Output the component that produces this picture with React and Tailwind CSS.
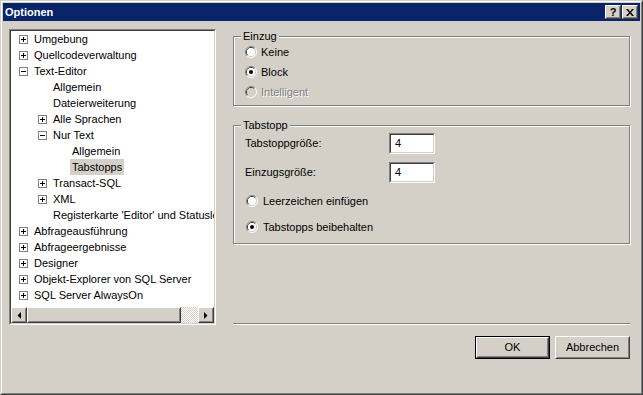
import React from "react";

const FONT = "font-['Liberation_Sans',Arial,sans-serif]";

function Raised({ className = "", children }) {
  return (
    <div className={`bg-[#d4d0c8] border border-t-white border-l-white border-r-[#404040] border-b-[#404040] ${className}`}>
      <div className="w-full h-full border border-t-[#d4d0c8] border-l-[#d4d0c8] border-r-[#808080] border-b-[#808080] flex items-center justify-center">
        {children}
      </div>
    </div>
  );
}

function Sunken({ className = "", innerClass = "", children }) {
  return (
    <div className={`border border-t-[#808080] border-l-[#808080] border-r-white border-b-white ${className}`}>
      <div className={`w-full h-full border border-t-[#404040] border-l-[#404040] border-r-[#d4d0c8] border-b-[#d4d0c8] ${innerClass}`}>
        {children}
      </div>
    </div>
  );
}

function Radio({ checked, disabled }) {
  return (
    <svg width="12" height="12" viewBox="0 0 12 12" className="shrink-0">
      <path d="M2.11 9.89 A5.5 5.5 0 0 1 9.89 2.11" fill="none" stroke="#808080" strokeWidth="1" />
      <path d="M9.89 2.11 A5.5 5.5 0 0 1 2.11 9.89" fill="none" stroke="#ffffff" strokeWidth="1" />
      <path d="M2.82 9.18 A4.5 4.5 0 0 1 9.18 2.82" fill="none" stroke="#404040" strokeWidth="1" />
      <path d="M9.18 2.82 A4.5 4.5 0 0 1 2.82 9.18" fill="none" stroke="#d4d0c8" strokeWidth="1" />
      <circle cx="6" cy="6" r="4" fill={disabled ? "#d4d0c8" : "#ffffff"} />
      {checked && <circle cx="6" cy="6" r="2" fill={disabled ? "#808080" : "#000000"} />}
    </svg>
  );
}

function ExpandBox({ open }) {
  return (
    <svg width="9" height="9" viewBox="0 0 9 9" className="shrink-0">
      <rect x="0.5" y="0.5" width="8" height="8" fill="#fff" stroke="#808080" />
      <rect x="2" y="4" width="5" height="1" fill="#000" />
      {!open && <rect x="4" y="2" width="1" height="5" fill="#000" />}
    </svg>
  );
}

const tree = [
  { l: 0, t: "Umgebung", b: "+" },
  { l: 0, t: "Quellcodeverwaltung", b: "+" },
  { l: 0, t: "Text-Editor", b: "-" },
  { l: 1, t: "Allgemein" },
  { l: 1, t: "Dateierweiterung" },
  { l: 1, t: "Alle Sprachen", b: "+" },
  { l: 1, t: "Nur Text", b: "-" },
  { l: 2, t: "Allgemein" },
  { l: 2, t: "Tabstopps", sel: true },
  { l: 1, t: "Transact-SQL", b: "+" },
  { l: 1, t: "XML", b: "+" },
  { l: 1, t: "Registerkarte 'Editor' und Statusleiste" },
  { l: 0, t: "Abfrageausführung", b: "+" },
  { l: 0, t: "Abfrageergebnisse", b: "+" },
  { l: 0, t: "Designer", b: "+" },
  { l: 0, t: "Objekt-Explorer von SQL Server", b: "+" },
  { l: 0, t: "SQL Server AlwaysOn", b: "+" },
];

const indent = ["pl-[8px]", "pl-[27px]", "pl-[46px]"];

function TreeRow({ item }) {
  return (
    <div className={`flex items-center h-4 whitespace-nowrap ${indent[item.l]}`}>
      {item.b ? <ExpandBox open={item.b === "-"} /> : <div className="w-[9px] shrink-0" />}
      {item.sel ? (
        <span className="ml-[4px] px-[2px] h-4 leading-4 bg-[#d4d0c8]">{item.t}</span>
      ) : (
        <span className="ml-[6px] leading-4">{item.t}</span>
      )}
    </div>
  );
}

function Arrow({ dir }) {
  return (
    <svg width="4" height="7" viewBox="0 0 4 7">
      {dir === "left" ? <path d="M4 0 L4 7 L0.5 3.5 Z" fill="#000" /> : <path d="M0 0 L0 7 L3.5 3.5 Z" fill="#000" />}
    </svg>
  );
}

function GroupBox({ label, className = "", children }) {
  return (
    <div className={`relative border border-[#808080] shadow-[inset_1px_1px_0_#fff,1px_1px_0_#fff] ${className}`}>
      <span className="absolute -top-[7px] left-[7px] px-[2px] bg-[#d4d0c8] leading-[13px]">{label}</span>
      {children}
    </div>
  );
}

export default function App() {
  return (
    <div className={`w-[643px] h-[395px] bg-[#d4d0c8] text-[11px] text-black ${FONT} border border-t-[#d4d0c8] border-l-[#d4d0c8] border-r-[#404040] border-b-[#404040]`}>
      <div className="w-full h-full border border-t-white border-l-white border-r-[#808080] border-b-[#808080] p-px flex flex-col">
        {/* Title bar */}
        <div className="h-[18px] bg-[#0a246a] flex items-center justify-between pl-[2px] pr-[2px] shrink-0">
          <span className="text-white font-bold text-[11px] leading-[18px]">Optionen</span>
          <div className="flex gap-[1px]">
            <Raised className="w-[16px] h-[14px]">
              <span className="font-bold text-[11px] leading-none text-black">?</span>
            </Raised>
            <Raised className="w-[16px] h-[14px]">
              <svg width="8" height="7" viewBox="0 0 8 7">
                <path d="M0 0 L2 0 L4 2.5 L6 0 L8 0 L5 3.5 L8 7 L6 7 L4 4.5 L2 7 L0 7 L3 3.5 Z" fill="#000" />
              </svg>
            </Raised>
          </div>
        </div>

        {/* Content */}
        <div className="flex flex-1 pl-[6px]">
          {/* Tree */}
          <Sunken className="w-[207px] h-[296px] mt-[8px] shrink-0" innerClass="bg-white flex flex-col overflow-hidden">
            <div className="flex flex-col h-[272px] overflow-hidden">
              {tree.map((it, i) => (
                <TreeRow key={i} item={it} />
              ))}
            </div>
            <div className="flex-1" />
            <div className="h-4 flex shrink-0">
              <Raised className="w-4 h-4 shrink-0">
                <Arrow dir="left" />
              </Raised>
              <Raised className="w-[154px] h-4 shrink-0" />
              <div className="flex-1 bg-[image:repeating-conic-gradient(#ffffff_0%_25%,#d4d0c8_0%_50%)] bg-[length:2px_2px]" />
              <Raised className="w-4 h-4 shrink-0">
                <Arrow dir="right" />
              </Raised>
            </div>
          </Sunken>

          {/* Right panel */}
          <div className="w-[397px] ml-[17px] pt-[15px] flex flex-col">
            <GroupBox label="Einzug" className="h-[70px]">
              <div className="flex flex-col pt-[5px] pl-[11px]">
                <div className="flex items-center h-5 gap-[4px]">
                  <Radio />
                  <span>Keine</span>
                </div>
                <div className="flex items-center h-5 gap-[4px]">
                  <Radio checked />
                  <span>Block</span>
                </div>
                <div className="flex items-center h-5 gap-[4px]">
                  <Radio disabled />
                  <span className="text-[#808080] [text-shadow:1px_1px_0_#fff]">Intelligent</span>
                </div>
              </div>
            </GroupBox>

            <GroupBox label="Tabstopp" className="h-[119px] mt-[19px]">
              <div className="flex flex-col pt-[7px] pl-[11px]">
                <div className="flex items-center h-[21px]">
                  <span className="w-[144px]">Tabstoppgröße:</span>
                  <Sunken className="w-[46px] h-[21px]" innerClass="bg-white flex items-center pl-[4px]">
                    <span>4</span>
                  </Sunken>
                </div>
                <div className="flex items-center h-[21px] mt-[8px]">
                  <span className="w-[144px]">Einzugsgröße:</span>
                  <Sunken className="w-[46px] h-[21px]" innerClass="bg-white flex items-center pl-[4px]">
                    <span>4</span>
                  </Sunken>
                </div>
                <div className="flex items-center h-5 mt-[8px] pl-[1px] gap-[5px]">
                  <Radio />
                  <span>Leerzeichen einfügen</span>
                </div>
                <div className="flex items-center h-5 mt-[6px] pl-[1px] gap-[5px]">
                  <Radio checked />
                  <span>Tabstopps beibehalten</span>
                </div>
              </div>
            </GroupBox>

            <div className="mt-[79px] h-[2px] border-t border-t-[#808080] border-b border-b-white" />

            <div className="flex justify-end gap-[5px] mt-[11px]">
              <div className="w-[75px] h-[23px] border border-black">
                <Raised className="w-full h-full">
                  <span>OK</span>
                </Raised>
              </div>
              <Raised className="w-[75px] h-[23px]">
                <span>Abbrechen</span>
              </Raised>
            </div>
          </div>
        </div>
      </div>
    </div>
  );
}
